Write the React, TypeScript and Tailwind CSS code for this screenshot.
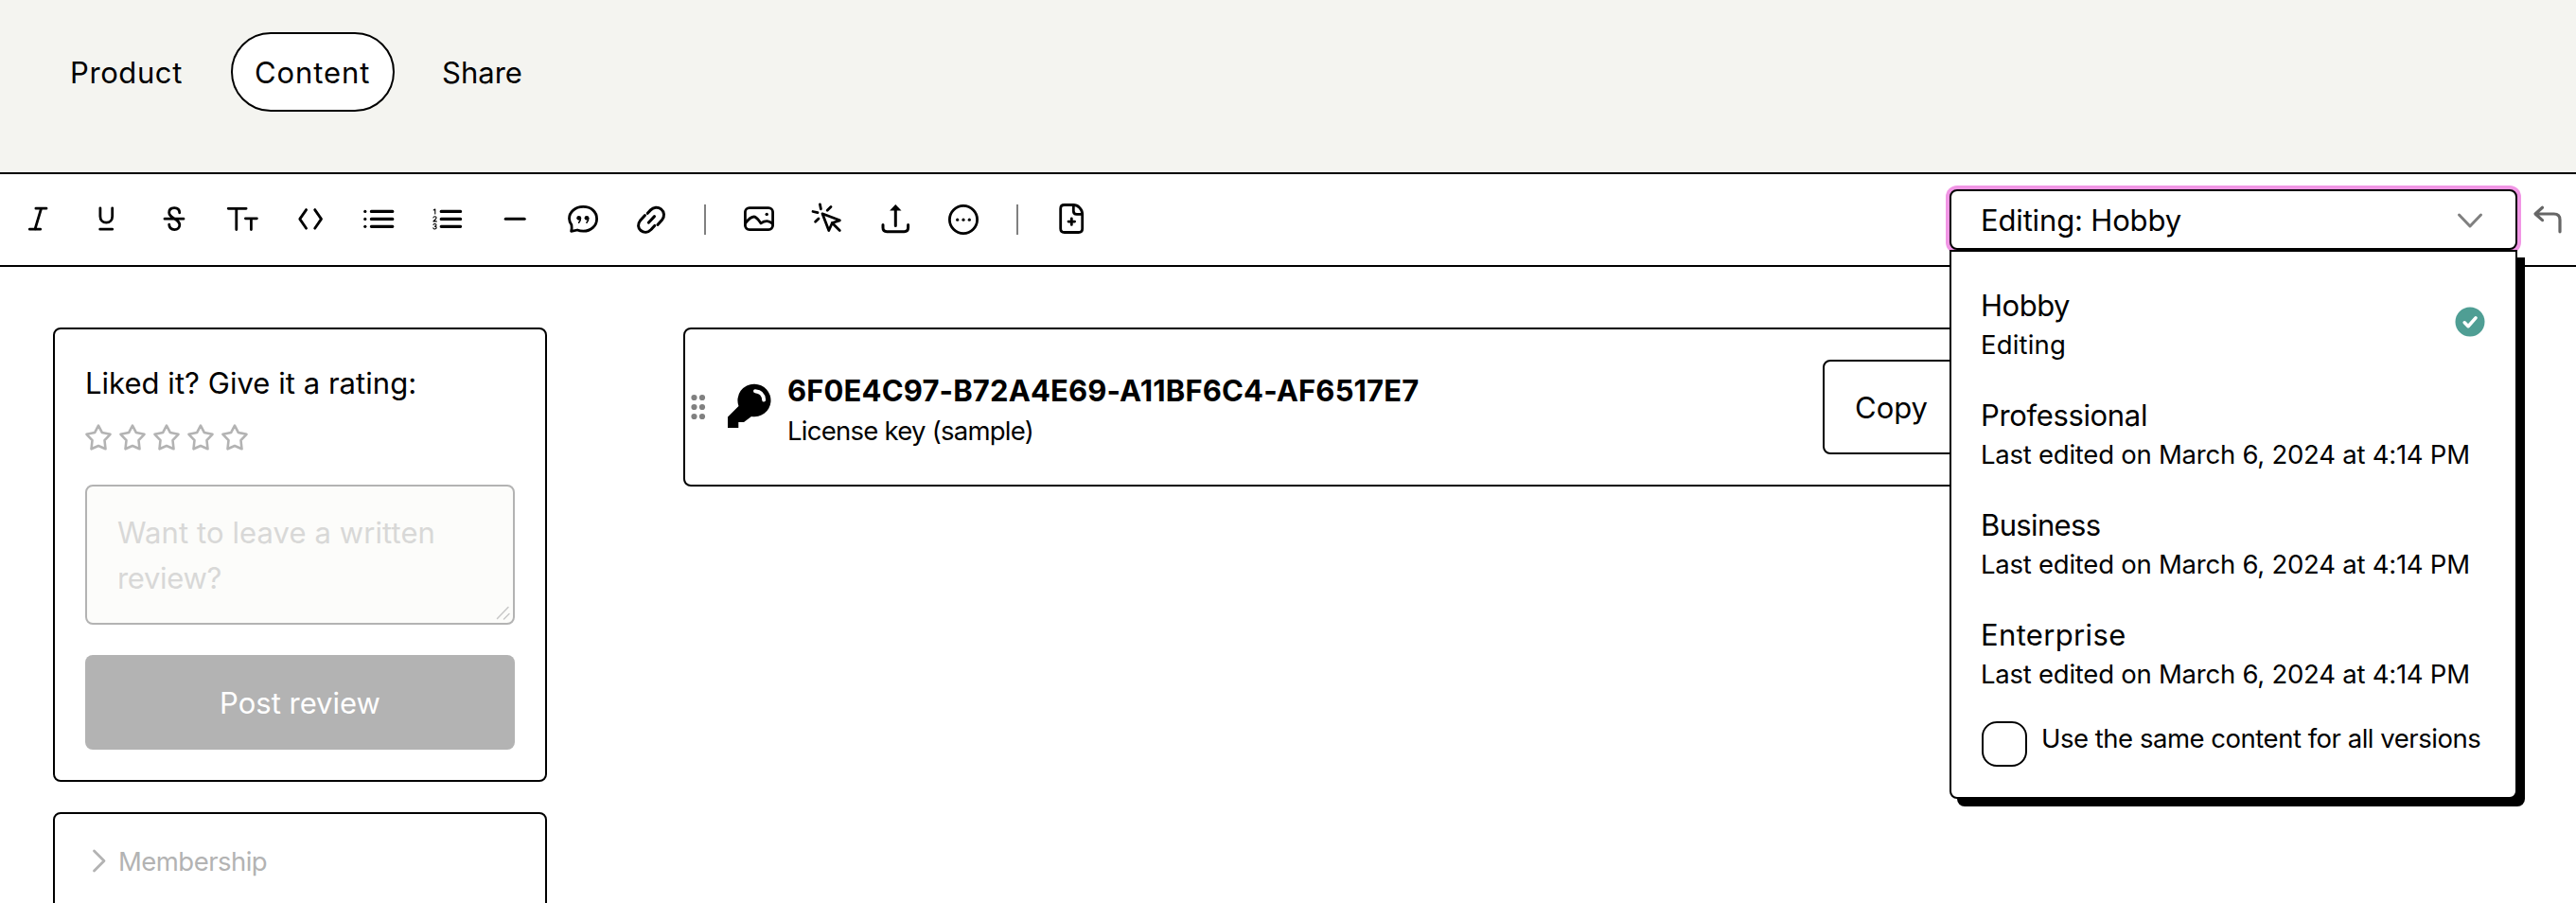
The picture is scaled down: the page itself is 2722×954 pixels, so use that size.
import type { ReactNode } from "react";

const tools: { name: string; icon: ReactNode }[] = [
  { name: "Italic", icon: <path d="M13.9 4.2H25M7.3 26.2h11.4M19.6 4.2L13 26.2" /> },
  { name: "Underline", icon: <path d="M9.9 3.8v8.7c0 4 2.6 6.7 6.4 6.7s6.4-2.7 6.4-6.7V3.8M9.7 26.2h13" /> },
  {
    name: "Strikethrough",
    icon: <path d="M6 15.2h20M21.7 8.8c0-3.2-2-5.2-5.5-5.2-3.4 0-5.5 1.9-5.5 4.9 0 3.8 3.3 5 6 6.700 3 1.800 5.100 3.300 5.100 6.400 0 3-2.200 5-5.400 5-3.400 0-5.500-2.200-5.700-5.400" />,
  },
  { name: "Text style", icon: <path d="M1.2 4.3h18.9M9.8 4.3v22.300M19.400 14.800h12M25.400 14.800v11.800" /> },
  { name: "Code", icon: <path d="M11.6 5.6L4.8 15.4l6.8 9.8M20.7 5.6l6.8 9.8-6.8 9.8" /> },
  {
    name: "Bullet list",
    icon: (
      <>
        <path d="M8.4 7.4h22.4M8.4 15.4h22.4M8.4 23.3h22.4" strokeWidth={3.2} />
        <g fill="currentColor" stroke="none">
          <circle cx="1.8" cy="7.4" r="1.6" />
          <circle cx="1.8" cy="15.4" r="1.6" />
          <circle cx="1.8" cy="23.3" r="1.6" />
        </g>
      </>
    ),
  },
  {
    name: "Numbered list",
    icon: (
      <>
        <path d="M10.2 7.4h20.4M10.2 15.4h20.4M10.2 23.3h20.4" strokeWidth={3.2} />
        <path
          d="M2.2 6L3.8 5v5M1.9 14c.2-1.6 3.2-1.6 3.2.1 0 1.3-1.7 2-3.2 3.8h3.4M2 21.4c.5-1.4 3-1.2 3 .3 0 .9-.8 1.4-1.7 1.4 1 0 1.9.5 1.9 1.5 0 1.7-2.9 1.8-3.4.2"
          strokeWidth={1.1}
        />
      </>
    ),
  },
  { name: "Divider", icon: <path d="M6.2 15.3h20" strokeWidth={3} /> },
  {
    name: "Quote",
    icon: (
      <>
        <path d="M3.9 21.5C2.3 19.2 1.5 17 1.5 15c0-6.9 6.2-12.6 14.800-12.600S30.600 8 30.600 15.200 24.600 28.200 16.300 28.200c-2.200 0-4.100-.3-6.300-1.200l-6.400 1.300c.6-2.300.8-4.400.3-6.800z" />
        <g fill="currentColor" stroke="none">
          <circle cx="11.700" cy="14.300" r="2.400" />
          <circle cx="20" cy="14.300" r="2.400" />
        </g>
        <path d="M13.300 14.600c.2 2-.4 3.500-1.600 4.500M21.600 14.600c.2 2-.4 3.500-1.600 4.500" strokeWidth={1.700} />
      </>
    ),
  },
  {
    name: "Link",
    icon: <path d="M12.3 9.3l3.2-3.4c3-3.3 7.7-3.6 11-1 3.7 3 3.9 7.9 1.1 11.3l-4.7 5.2M9.5 11.5l-5 5.6c-2.9 3.4-2.5 7.8.6 10.4 3.3 2.7 7.8 2.2 10.9-1l3.700-4.100M13.300 19.200l6.200-6.600" strokeWidth={3} />,
  },
];

const inserts: { name: string; icon: ReactNode }[] = [
  {
    name: "Image",
    icon: (
      <>
        <rect x="1.4" y="3.6" width="29.2" height="23" rx="4.5" />
        <path d="M1.6 19.8C5 15.5 7.8 13 10.6 13c2.9 0 4.9 3.5 7.4 6.8 2.6-1.8 4.5-2.4 6.8-2.2 2.2.2 4 1.2 5.6 2.8" />
        <circle cx="24.2" cy="10.4" r="1.7" fill="currentColor" stroke="none" />
      </>
    ),
  },
  {
    name: "Button",
    icon: (
      <>
        <path d="M11 9.8l18.4 7-8 2.7-3.6 8z" />
        <path d="M21.3 19.4l8 8" />
        <path d="M8.4-.2l1 5M20 2.5l-3.8 3.8M1 7.5l5 1.2M7 14.9l-3.4 3.4" />
      </>
    ),
  },
  {
    name: "Upload",
    icon: (
      <>
        <path d="M3 21.5v3c0 2.6 1.5 4.2 4.2 4.2h18.2c2.7 0 4.2-1.6 4.2-4.2v-3M16.3 6v16.5" strokeWidth={3} />
        <path d="M16.3 0l6.2 6.5H10.1z" fill="currentColor" stroke="none" />
      </>
    ),
  },
  {
    name: "More",
    icon: (
      <>
        <circle cx="16" cy="16" r="14.6" />
        <g fill="currentColor" stroke="none">
          <circle cx="9.7" cy="16.2" r="1.6" />
          <circle cx="16" cy="16.2" r="1.6" />
          <circle cx="22.3" cy="16.2" r="1.6" />
        </g>
      </>
    ),
  },
];

const pageIcon = (
  <>
    <path d="M18 .5H8.700C6 .5 4.700 1.800 4.700 4.500v21c0 2.700 1.300 4 4 4h15c2.700 0 4-1.300 4-4V10.200C27.700 5 23.200.5 18 .5z" />
    <path d="M18.300.8v6c0 2.400 1 3.600 3.500 3.600h5.700M16.300 14.800v6.600M13 18.100h6.600" />
  </>
);

const versions = [
  { name: "Hobby", note: "Editing", nameTrack: "tracking-[-0.48px]", noteTrack: "tracking-[0.17px]", active: true },
  { name: "Professional", note: "Last edited on March 6, 2024 at 4:14 PM", nameTrack: "tracking-[-0.35px]", noteTrack: "tracking-[-0.24px]" },
  { name: "Business", note: "Last edited on March 6, 2024 at 4:14 PM", nameTrack: "tracking-[-0.64px]", noteTrack: "tracking-[-0.24px]" },
  { name: "Enterprise", note: "Last edited on March 6, 2024 at 4:14 PM", nameTrack: "tracking-[0.35px]", noteTrack: "tracking-[-0.24px]" },
];

function ToolButton({ name, children }: { name: string; children: ReactNode }) {
  return (
    <button aria-label={name} className="flex h-16 w-[72px] shrink-0 items-center justify-center">
      <svg
        viewBox="0 0 32 32"
        className="size-8 overflow-visible"
        fill="none"
        stroke="currentColor"
        strokeWidth={2.8}
        strokeLinecap="round"
        strokeLinejoin="round"
      >
        {children}
      </svg>
    </button>
  );
}

function Separator() {
  return <div className="mx-5 h-8 w-0.5 shrink-0 bg-[#808080]" />;
}

function Star() {
  return (
    <svg viewBox="0 0 28 28" className="size-7 overflow-visible" fill="none" stroke="#b3b3b3" strokeWidth={2.6} strokeLinejoin="round">
      <path d="M14 1.6l3.8 7.3 8.7 1.9-6 6.3 1 9.2L14 23l-7.5 3.3 1-9.2-6-6.3 8.7-1.9z" />
    </svg>
  );
}

function VersionMenu() {
  return (
    <div className="absolute -left-0.5 top-[62px] z-10 h-[580px] w-[600px] rounded-b-lg border-2 border-black bg-white px-[31px] pt-[19px] shadow-[8px_8px_0_0_#000]">
      {versions.map((v) => (
        <div key={v.name} className="flex h-[116px] items-start justify-between pt-4">
          <div className="whitespace-nowrap">
            <div className={`text-[31px] leading-[44px] ${v.nameTrack}`}>{v.name}</div>
            <div className={`text-[27.5px] leading-[38px] ${v.noteTrack}`}>{v.note}</div>
          </div>
          {v.active && (
            <svg viewBox="0 0 32 32" className="mt-[23px] mr-px size-8">
              <circle cx="16" cy="16" r="15.5" fill="#4f9e94" />
              <path d="M10.2 16.8l3.900 3.900 7.900-8.800" fill="none" stroke="#fff" strokeWidth={3.6} strokeLinecap="round" strokeLinejoin="round" />
            </svg>
          )}
        </div>
      ))}
      <label className="flex items-start gap-4 pl-px">
        <span className="mt-[13px] size-12 shrink-0 rounded-2xl border-2 border-black" />
        <span className="mt-3 -ml-px whitespace-nowrap text-[27.5px] leading-[38px] tracking-[-0.48px]">
          Use the same content for all versions
        </span>
      </label>
    </div>
  );
}

export default function App() {
  return (
    <div className="h-[954px] w-[2722px] overflow-hidden bg-white font-[Inter,sans-serif] text-[31px] leading-[48px] text-black">
      <header className="h-[184px] border-b-2 border-black bg-[#f4f4f0] pt-[34px]">
        <nav className="flex gap-6 pl-[49px]">
          <a className="flex h-[84px] w-[171px] items-center pl-[25px] pt-0.5 tracking-[0.6px]">Product</a>
          <a className="flex h-[84px] w-[173px] items-center rounded-[42px] border-2 border-black bg-white pl-[23px] pt-0.5 tracking-[0.9px]">
            Content
          </a>
          <a className="flex h-[84px] items-center pl-[26px] pt-0.5">Share</a>
        </nav>
      </header>

      <div className="flex h-[98px] items-center border-b-2 border-black pl-1 pr-3.5">
        {tools.map((t) => (
          <ToolButton key={t.name} name={t.name}>
            {t.icon}
          </ToolButton>
        ))}
        <Separator />
        {inserts.map((t) => (
          <ToolButton key={t.name} name={t.name}>
            {t.icon}
          </ToolButton>
        ))}
        <Separator />
        <ToolButton name="Page">{pageIcon}</ToolButton>

        <div className="relative ml-auto flex h-16 w-[600px] items-center justify-between rounded-lg border-2 border-black bg-white pl-[31px] pr-[34px] shadow-[0_0_0_4px_#f196e5]">
          <span className="pt-0.5 tracking-[-0.16px]">Editing: Hobby</span>
          <svg viewBox="0 0 28 28" className="size-7" fill="none" stroke="#808080" strokeWidth={3} strokeLinecap="round" strokeLinejoin="round">
            <path d="M2.5 9L14 21 25.5 9" />
          </svg>
          <VersionMenu />
        </div>
        <svg viewBox="0 0 32 32" className="ml-4 size-8" fill="none" stroke="#666" strokeWidth={3.2} strokeLinecap="round" strokeLinejoin="round">
          <path d="M10.5 3.2L3 10l7.5 6.6M3.5 10h19.2c4.2 0 6.3 2 6.3 6.2v12.6" />
        </svg>
      </div>

      <main className="flex items-start pl-14 pt-16">
        <aside className="flex w-[522px] flex-col gap-8">
          <section className="flex h-[480px] flex-col rounded-lg border-2 border-black px-8 pt-[33px]">
            <h2 className="tracking-[0.04px]">Liked it? Give it a rating:</h2>
            <div className="mt-[19px] flex gap-2">
              <Star />
              <Star />
              <Star />
              <Star />
              <Star />
            </div>
            <div className="relative mt-9 h-[148px] shrink-0 rounded-lg border-2 border-[#b3b3b3] bg-[#fcfcfa] pl-8 pt-[25px] text-[#d8d8d7]">
              <div className="tracking-[0.09px]">Want to leave a written</div>
              <div className="tracking-[-0.33px]">review?</div>
              <svg viewBox="0 0 16 16" className="absolute bottom-0.5 right-0.5 size-4" stroke="#c8c8c8" strokeWidth={1.5} strokeLinecap="round">
                <path d="M1.5 13.5l11.5-12M8.5 14l5.5-5.5" />
              </svg>
            </div>
            <button className="mt-8 h-[100px] shrink-0 rounded-lg bg-[#b3b3b3] pt-0.5 text-white">Post review</button>
          </section>
          <section className="flex h-[300px] items-start rounded-lg border-2 border-black pl-[38px] pt-[31px] text-[27.5px] leading-[38px] text-[#b3b3b3]">
            <svg viewBox="0 0 16 26" className="mt-[5px] h-[26px] w-4" fill="none" stroke="currentColor" strokeWidth={2.8} strokeLinecap="round" strokeLinejoin="round">
              <path d="M3.5 3L14 13.5 3.5 24" />
            </svg>
            <span className="ml-[13px] tracking-[-0.54px]">Membership</span>
          </section>
        </aside>

        <section className="ml-36 flex h-[168px] w-[1382px] items-start rounded-lg border-2 border-black pl-1.5 pr-8">
          <svg viewBox="0 0 16 28" className="mt-[68px] h-7 w-4 shrink-0" fill="#808080">
            <circle cx="3.5" cy="4" r="3.1" />
            <circle cx="12" cy="4" r="3.1" />
            <circle cx="3.5" cy="14" r="3.1" />
            <circle cx="12" cy="14" r="3.1" />
            <circle cx="3.5" cy="24" r="3.1" />
            <circle cx="12" cy="24" r="3.1" />
          </svg>
          <svg viewBox="0 0 48 48" className="ml-[22px] mt-14 size-12 shrink-0">
            <path d="M29.300 1.700A17.300 17.300 0 1 1 26 36L18 42H12.300V48H1V36.500L12.500 25A17.300 17.300 0 0 1 29.300 1.700z" fill="#000" />
            <path d="M30 9.200c5.600.4 8.800 3.700 9.200 9.300" fill="none" stroke="#fff" strokeWidth={4} strokeLinecap="round" />
          </svg>
          <div className="ml-4 mt-[42px] whitespace-nowrap">
            <div className="font-bold leading-[46px] tracking-[0.13px]">6F0E4C97-B72A4E69-A11BF6C4-AF6517E7</div>
            <div className="text-[27.5px] leading-[38px] tracking-[-0.75px]">License key (sample)</div>
          </div>
          <button className="ml-auto mt-8 h-[100px] w-[144px] rounded-lg border-2 border-black pl-8 pt-0.5 text-left">Copy</button>
        </section>
      </main>
    </div>
  );
}
